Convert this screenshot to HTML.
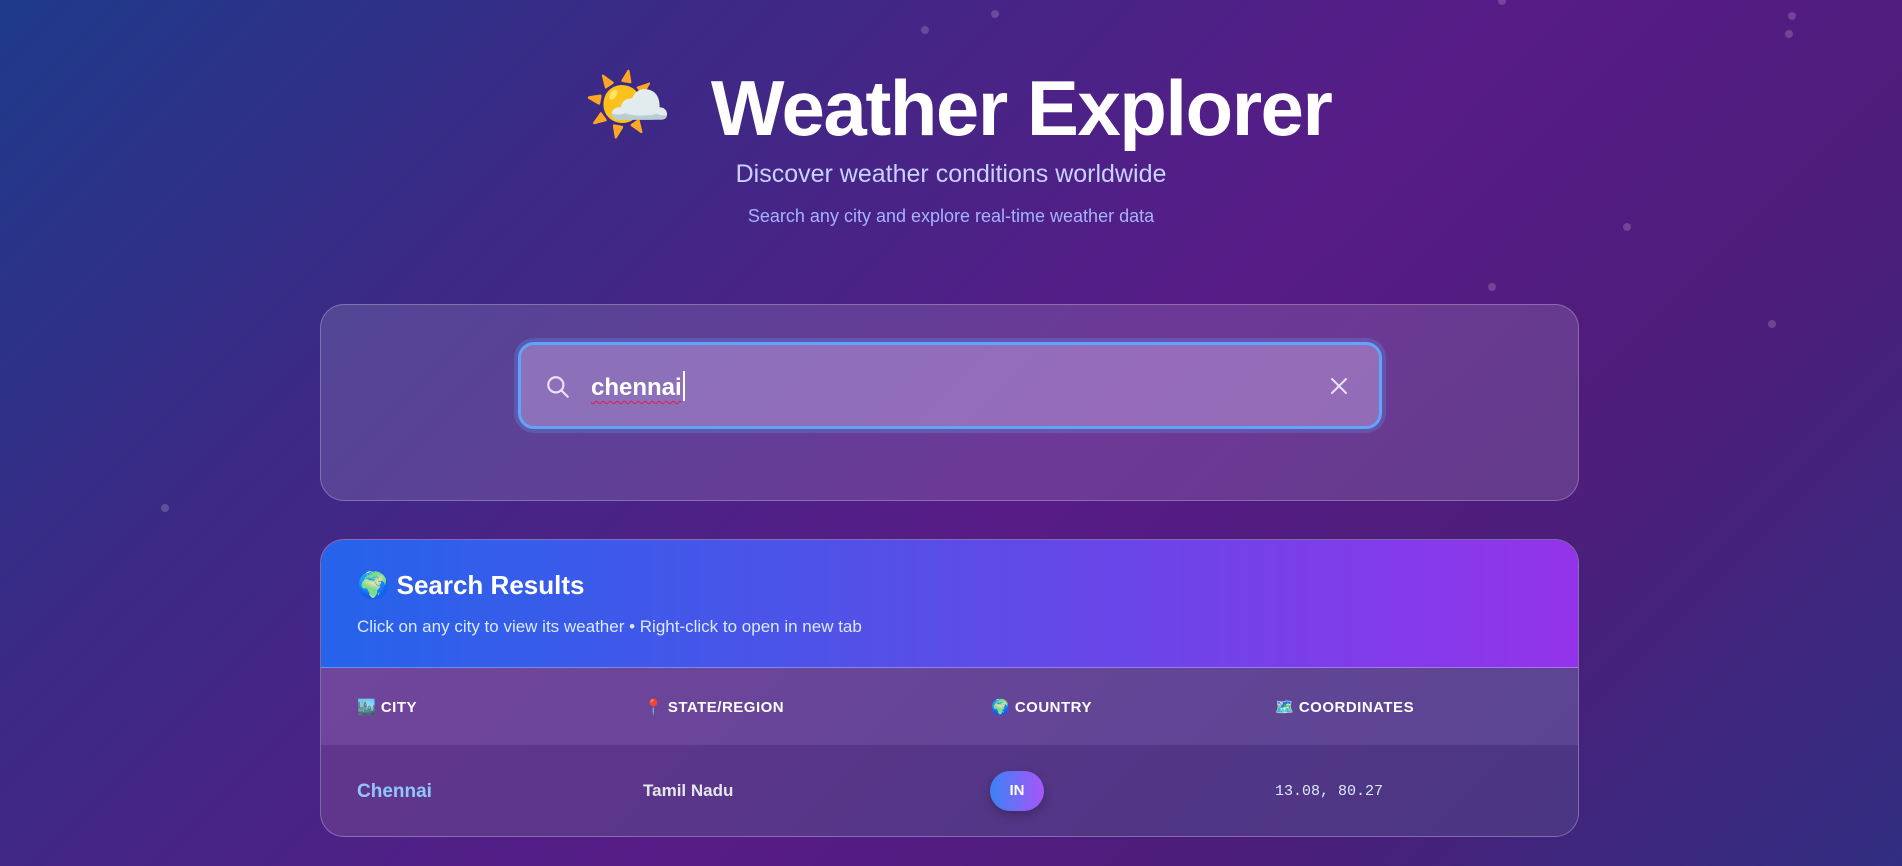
<!DOCTYPE html>
<html><head><meta charset="utf-8"><style>
*{margin:0;padding:0;box-sizing:border-box}
body{width:1902px;height:866px;overflow:hidden;font-family:"Liberation Sans","DejaVu Sans",sans-serif;
background:linear-gradient(135deg,#1e3a8a 0%,#3b2a86 25%,#581c87 55%,#4c1d7a 75%,#312e81 100%);position:relative;color:#fff}
.dot{position:absolute;width:8px;height:8px;border-radius:50%;background:rgba(255,255,255,.18)}
.title{position:absolute;top:62px;left:0;width:1902px;text-align:center;font-size:78px;font-weight:bold;letter-spacing:-1.5px;padding-left:12px}
.title .emo{font-size:72px;vertical-align:6px;margin-right:40px;font-family:"Noto Color Emoji",sans-serif}
.sub{position:absolute;top:160px;width:1902px;text-align:center;font-size:25px;color:#c7d2fe}
.sub2{position:absolute;top:206px;width:1902px;text-align:center;font-size:18px;color:#a5b4fc}
.card1{position:absolute;left:320px;top:304px;width:1259px;height:197px;border-radius:24px;background:rgba(255,255,255,.13);border:1px solid rgba(255,255,255,.25)}
.input{position:absolute;left:518px;top:342px;width:864px;height:87px;border-radius:16px;background:rgba(200,170,230,.45);border:3px solid #60a5fa;box-shadow:0 0 0 4px rgba(96,165,250,.25)}
.input .txt{position:absolute;left:70px;top:26px;font-size:24px;font-weight:bold;color:#fff;white-space:nowrap}
.input .txt u{text-decoration:underline wavy #e11d48;text-decoration-thickness:1px;text-underline-offset:5px}
.caret{display:inline-block;width:2px;height:30px;background:#fff;vertical-align:-6px;margin-left:1px}
.card2{position:absolute;left:320px;top:539px;width:1259px;height:298px;border-radius:24px;overflow:hidden;border:1px solid rgba(255,255,255,.25);background:linear-gradient(135deg,#6b3a97,#4f3a8c)}
.hd{height:128px;background:linear-gradient(90deg,#2563eb,#4f52e8 40%,#9333ea);border-bottom:1px solid rgba(255,255,255,.3);padding:30px 36px}
.hd h2{font-size:26px;font-weight:bold}
.hd p{font-size:17px;color:#dbeafe;margin-top:16px}
.th{height:77px;background:rgba(255,255,255,.06);position:relative;font-size:15px;font-weight:bold;letter-spacing:.5px}
.th span,.tr span{position:absolute}
.th span{top:30px}
.tr{height:93px;position:relative;background:rgba(0,0,0,.06)}
</style></head><body>
<div class="dot" style="left:921px;top:26px"></div><div class="dot" style="left:991px;top:10px"></div>
<div class="dot" style="left:1498px;top:-3px"></div><div class="dot" style="left:1788px;top:12px"></div>
<div class="dot" style="left:1785px;top:30px"></div><div class="dot" style="left:1623px;top:223px"></div>
<div class="dot" style="left:1488px;top:283px"></div><div class="dot" style="left:1768px;top:320px"></div>
<div class="dot" style="left:161px;top:504px"></div>
<div class="title"><span class="emo">🌤️</span>Weather Explorer</div>
<div class="sub">Discover weather conditions worldwide</div>
<div class="sub2">Search any city and explore real-time weather data</div>
<div class="card1"></div>
<div class="input">
<svg style="position:absolute;left:24px;top:29px" width="26" height="26" viewBox="0 0 24 24" fill="none" stroke="#e9e3f5" stroke-width="2" stroke-linecap="round"><circle cx="10" cy="10" r="7"/><path d="M15.5 15.5L21 21"/></svg>
<span class="txt"><u>chennai</u><span class="caret"></span></span>
<svg style="position:absolute;right:30px;top:31px" width="20" height="20" viewBox="0 0 20 20" stroke="#e9e3f5" stroke-width="2" stroke-linecap="round"><path d="M3 3L17 17M17 3L3 17"/></svg>
</div>
<div class="card2">
<div class="hd"><h2>🌍 Search Results</h2><p>Click on any city to view its weather • Right-click to open in new tab</p></div>
<div class="th"><span style="left:36px">🏙️ CITY</span><span style="left:323px">📍 STATE/REGION</span><span style="left:670px">🌍 COUNTRY</span><span style="left:954px">🗺️ COORDINATES</span></div>
<div class="tr">
<span style="left:36px;top:36px;font-size:19px;font-weight:bold;color:#93c5fd">Chennai</span>
<span style="left:322px;top:36px;font-size:17px;font-weight:bold;color:#e5e7eb">Tamil Nadu</span>
<span style="left:669px;top:26px;width:54px;height:40px;border-radius:20px;background:linear-gradient(90deg,#3b82f6,#a855f7);font-size:15px;font-weight:bold;text-align:center;line-height:40px;box-shadow:0 4px 10px rgba(0,0,0,.25)">IN</span>
<span style="left:954px;top:38px;font-family:'Liberation Mono',monospace;font-size:15px;color:#dbeafe">13.08, 80.27</span>
</div>
</div>
</body></html>
